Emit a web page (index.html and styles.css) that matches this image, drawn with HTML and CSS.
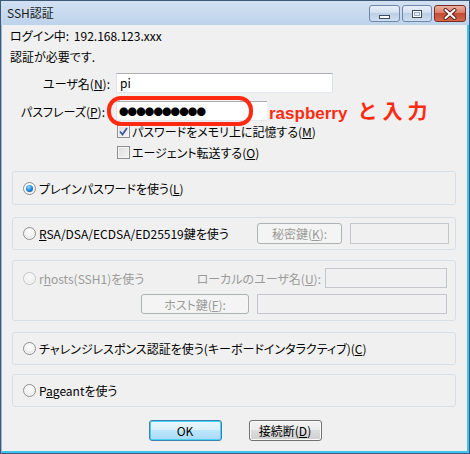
FILE: index.html
```html
<!DOCTYPE html>
<html lang="ja">
<head>
<meta charset="utf-8">
<link rel="stylesheet" href="styles.css">
</head>
<body>
<div class="window">
  <div class="titlebar">
    <span class="title">SSH認証</span>
    <div class="caption-btns">
      <span class="cbtn min"><i class="min-glyph"></i></span>
      <span class="cbtn max"><i class="max-glyph"></i></span>
      <span class="cbtn close">
        <svg width="16" height="12" viewBox="0 0 16 12"><path d="M3.5 2 L12.5 10 M12.5 2 L3.5 10" stroke="#5a1a14" stroke-width="4" stroke-linecap="round"/><path d="M3.5 2 L12.5 10 M12.5 2 L3.5 10" stroke="#ffffff" stroke-width="2.2" stroke-linecap="round"/></svg>
      </span>
    </div>
  </div>
  <div class="client">
    <p class="line l1">ログイン中: 192.168.123.xxx</p>
    <p class="line l2">認証が必要です.</p>

    <div class="field-row user-row">
      <span class="flabel">ユーザ名(<u>N</u>):</span>
      <div class="textbox">pi</div>
    </div>
    <div class="field-row pass-row">
      <span class="flabel pass-label">パスフレーズ(<u>P</u>):</span>
      <div class="textbox pw">●●●●●●●●●●</div>
      <span class="oval"></span>
      <span class="note">raspberry<span class="note-ja">と入力</span></span>
    </div>

    <div class="check-row cr1"><span class="cb checked"><svg width="9" height="9" viewBox="0 0 9 9"><path d="M1 4.5 L3.5 7.5 L8 1" fill="none" stroke="#3c5a9a" stroke-width="1.8"/></svg></span><span>パスワードをメモリ上に記憶する(<u>M</u>)</span></div>
    <div class="check-row cr2"><span class="cb"></span><span>エージェント転送する(<u>O</u>)</span></div>

    <div class="group g1">
      <span class="radio on"></span><span class="rlabel">プレインパスワードを使う(<u>L</u>)</span>
    </div>

    <div class="group g2">
      <span class="radio"></span><span class="rlabel"><u>R</u>SA/DSA/ECDSA/ED25519鍵を使う</span>
      <span class="btn disabled keybtn">秘密鍵(<u>K</u>):</span>
      <span class="textbox disabled keyfile"></span>
    </div>

    <div class="group g3">
      <div class="g3-row">
        <span class="radio disabled"></span><span class="rlabel dim">r<u>h</u>osts(SSH1)を使う</span>
        <span class="dim locallabel">ローカルのユーザ名(<u>U</u>):</span>
        <span class="textbox disabled localuser"></span>
      </div>
      <div class="g3-row row2">
        <span class="btn disabled hostbtn">ホスト鍵(<u>F</u>):</span>
        <span class="textbox disabled hostfile"></span>
      </div>
    </div>

    <div class="group g4">
      <span class="radio"></span><span class="rlabel">チャレンジレスポンス認証を使う(キーボードインタラクティブ)(<u>C</u>)</span>
    </div>

    <div class="group g5">
      <span class="radio"></span><span class="rlabel">P<u>a</u>geantを使う</span>
    </div>

    <div class="buttons">
      <span class="btn default">OK</span>
      <span class="btn">接続断(<u>D</u>)</span>
    </div>
  </div>
</div>
</body>
</html>
```

FILE: styles.css
```css
* { box-sizing: border-box; }
html, body { margin: 0; padding: 0; }
body {
  width: 470px;
  height: 454px;
  overflow: hidden;
  font-family: "Noto Sans CJK JP", sans-serif;
  font-size: 12px;
  font-feature-settings: "palt";
  color: #000;
  background: #f0f0f0;
}
u { text-decoration: underline; text-underline-offset: 1px; }

.window {
  width: 470px;
  height: 454px;
  border: 1px solid #3e5878;
  display: flex;
  flex-direction: column;
  background: linear-gradient(#d2e1f2, #bdd3ec 24px);
}

.titlebar {
  height: 24px;
  display: flex;
  align-items: flex-start;
  flex-shrink: 0;
}
.title {
  padding: 3px 0 0 6px;
  font-size: 12px;
  line-height: 18px;
  color: #1a1a1a;
  font-feature-settings: normal;
}
.caption-btns {
  margin-left: auto;
  margin-right: 3px;
  margin-top: 4px;
  display: flex;
  gap: 2px;
}
.cbtn {
  height: 17px;
  border: 1px solid #7088a8;
  border-radius: 3px;
  display: flex;
  align-items: center;
  justify-content: center;
  background: linear-gradient(#e8f0f9 0%, #d2dfee 45%, #bccfe5 50%, #cfdeef 100%);
}
.cbtn.min { width: 31px; }
.cbtn.max { width: 30px; }
.cbtn.close {
  width: 32px;
  border-color: #7a2e24;
  background: linear-gradient(#eab0a2 0%, #dc7e68 45%, #c44c32 50%, #d4694e 100%);
}
.min-glyph {
  display: block;
  width: 11px;
  height: 4px;
  margin-top: 6px;
  border: 1px solid #3a4a60;
  background: #fff;
}
.max-glyph {
  display: block;
  width: 10px;
  height: 8px;
  border: 1px solid #3a4a60;
  background: #e8eef6;
  box-shadow: inset 0 0 0 1px #fff, inset 0 0 0 2px #9aaecb;
}

.client {
  flex: 1;
  background: #f0f0f0;
  border-left: 1px solid #9ab6d8;
  border-right: 2px solid #3ec3ee;
  border-bottom: 2px solid #3ec3ee;
  padding: 0 7px 0 8px;
}

.line {
  margin: 0;
  line-height: 16px;
  white-space: nowrap;
}
.l1 { margin-top: 3px; word-spacing: 2px; }
.l2 { margin-top: 5px; }

.field-row {
  display: flex;
  align-items: center;
  height: 20px;
  position: relative;
}
.user-row { margin-top: 8px; }
.pass-row { margin-top: 8px; }
.flabel {
  width: 100px;
  text-align: right;
  white-space: nowrap;
  flex-shrink: 0;
}
.pass-label { padding-right: 5px; }

.textbox {
  height: 20px;
  border: 1px solid #abadb3;
  border-right-color: #dbdfe6;
  border-bottom-color: #e3e9ef;
  border-left-color: #e2e3ea;
  background: #fff;
  line-height: 18px;
  padding-left: 3px;
}
.field-row .textbox {
  margin-left: 6px;
  width: 217px;
}
.textbox.pw {
  font-size: 9.5px;
  letter-spacing: -0.9px;
  padding-left: 2px;
  line-height: 18px;
  white-space: nowrap;
  overflow: hidden;
}
.oval {
  position: absolute;
  left: 97px;
  top: -5px;
  width: 146px;
  height: 30px;
  border: 4px solid #ff2a12;
  border-radius: 14px;
}
.note {
  position: absolute;
  left: 257px;
  top: -3px;
  height: 26px;
  padding: 0 2px 0 2px;
  background: #f0f0f0;
  color: #ff2a12;
  font-family: "Liberation Sans", "Noto Sans CJK JP", sans-serif;
  font-weight: bold;
  font-size: 17px;
  line-height: 26px;
  white-space: nowrap;
  display: flex;
  align-items: baseline;
}
.note-ja {
  font-family: "Noto Sans CJK JP", sans-serif;
  font-size: 20px;
  letter-spacing: 5px;
  margin-left: 10px;
  font-feature-settings: normal;
}

.check-row {
  display: flex;
  align-items: center;
  height: 16px;
  padding-left: 107px;
  white-space: nowrap;
}
.cr1 { margin-top: 2px; }
.cr2 { margin-top: 5px; }
.cb {
  width: 13px;
  height: 13px;
  border: 1px solid #8e8f8f;
  background: linear-gradient(135deg, #dcdcdc, #f6f6f6);
  box-shadow: inset 0 0 0 1px #f4f4f4;
  margin-right: 2px;
  display: flex;
  align-items: center;
  justify-content: center;
  flex-shrink: 0;
}

.group {
  width: 444px;
  margin-left: 2px;
  border: 1px solid #d5dfe5;
  border-radius: 3px;
  display: flex;
  align-items: center;
  padding: 0 6px 0 10px;
  white-space: nowrap;
}
.g1 { margin-top: 11px; height: 34px; }
.g2 { margin-top: 12px; height: 33px; }
.g3 {
  margin-top: 10px;
  height: 61px;
  flex-direction: column;
  align-items: stretch;
  justify-content: flex-start;
  padding: 7px 8px 6px 10px;
  gap: 6px;
}
.g4 { margin-top: 11px; height: 33px; }
.g5 { margin-top: 9px; height: 33px; }

.g3-row {
  display: flex;
  align-items: center;
  height: 20px;
}
.row2 { justify-content: flex-end; }

.radio {
  width: 13px;
  height: 13px;
  border-radius: 50%;
  border: 1px solid #8e8f8f;
  background: radial-gradient(circle at 50% 40%, #ffffff 0%, #f2f2f2 45%, #d4d4d4 100%);
  box-shadow: inset 0 0 0 1px #fafafa;
  flex-shrink: 0;
  position: relative;
}
.radio.on::after {
  content: "";
  position: absolute;
  left: 2px;
  top: 2px;
  width: 7px;
  height: 7px;
  border-radius: 50%;
  background: radial-gradient(circle at 40% 30%, #9ee0ff 0%, #2a8ee0 45%, #0d4f9a 100%);
}
.radio.disabled {
  border-color: #c2c4c6;
  background: radial-gradient(circle at 50% 40%, #fafafa, #e6e6e6);
}
.rlabel { margin-left: 3px; }
.dim { color: #9a9a9a; }

.btn {
  height: 21px;
  border: 1px solid #707070;
  border-radius: 3px;
  display: flex;
  align-items: center;
  justify-content: center;
  background: linear-gradient(#f2f2f2 0%, #ebebeb 50%, #dddddd 50%, #cfcfcf 100%);
  box-shadow: inset 0 0 0 1px #fcfcfc;
  white-space: nowrap;
  flex-shrink: 0;
}
.btn.disabled {
  border-color: #adb2b5;
  background: #f4f4f4;
  box-shadow: none;
  color: #9a9a9a;
}
.btn.default {
  border-color: #3c7fb1;
  background: linear-gradient(#eaf6fd 0%, #d9f0fc 50%, #bee6fd 50%, #a7d9f5 100%);
  box-shadow: inset 0 0 0 1px #48d3f4;
}
.keybtn { margin-left: auto; width: 85px; }
.textbox.disabled {
  background: #f0f0f0;
  border: 1px solid #c4c8cc;
}
.keyfile { margin-left: 8px; width: 99px; height: 21px; }
.locallabel { margin-left: auto; margin-right: 4px; }
.localuser { width: 122px; }
.hostbtn { width: 108px; height: 20px; }
.hostfile { margin-left: 8px; width: 190px; }

.buttons {
  margin-top: 13px;
  display: flex;
  justify-content: center;
  gap: 27px;
}
.buttons .btn { width: 73px; }
```
